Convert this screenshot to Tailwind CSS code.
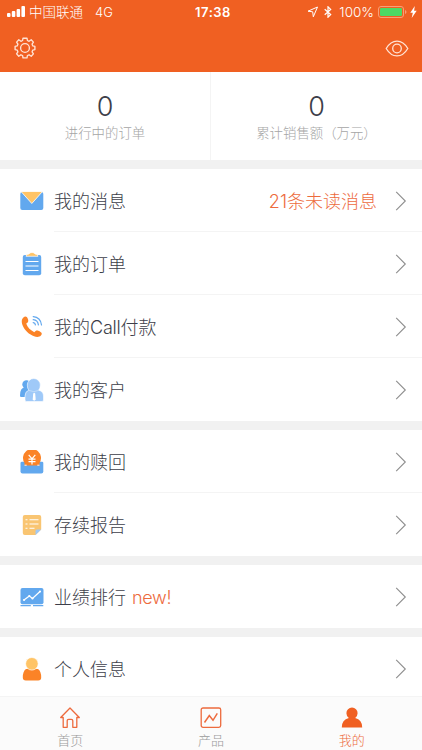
<!DOCTYPE html>
<html lang="zh-CN">
<head>
<meta charset="utf-8">
<title>我的</title>
<script src="https://cdn.jsdelivr.net/npm/@tailwindcss/browser@4"></script>
</head>
<body class="h-[750px] w-[422px] overflow-hidden bg-[#f1f1f1] font-['Inter','Noto_Sans_CJK_SC',sans-serif] font-light text-[#3d3e49]">
<svg class="hidden"><symbol id="chev" viewBox="0 0 12 20"><path d="M1.2 .8 10.3 10 1.2 19.2" fill="none" stroke="#8e8e8e" stroke-width="1.1"/></symbol></svg>
<div class="flex h-full flex-col">
  <header class="h-[72px] shrink-0 bg-[#f06022] text-white">
    <div class="grid h-6 grid-cols-3 items-center text-[13px] leading-6">
      <div class="flex items-center pl-[7px]">
        <svg class="h-3 w-[19px]" viewBox="0 0 19 12" fill="#fff"><rect y="7" width="3.5" height="4" rx="1"/><rect x="4.8" y="5" width="3.5" height="6" rx="1"/><rect x="9.6" y="3" width="3.5" height="8" rx="1"/><rect x="14.4" y="0" width="3.6" height="11" rx="1"/></svg>
        <span class="ml-[3px] text-[13.5px]">中国联通</span><span class="ml-3">4G</span>
      </div>
      <div class="pl-1 text-center text-[13px] font-semibold tracking-[0.5px]">17:38</div>
      <div class="flex items-center justify-end pr-[5px]">
        <svg class="h-3 w-3" viewBox="0 0 12 12" fill="none" stroke="#fff"><path d="M1 5.2 10.5 1 6.3 10.8 5.7 5.8Z"/></svg>
        <svg class="ml-[5px] h-3 w-2" viewBox="0 0 8 12" fill="none" stroke="#fff" stroke-width="1.2"><path d="M.7 3.2 6.7 8.6 4 11.2V.8L6.7 3.4.7 8.8"/></svg>
        <span class="ml-[7px] text-[13.5px]">100%</span>
        <svg class="ml-1 h-3 w-[29px]" viewBox="0 0 29 12"><rect x=".5" y=".5" width="25" height="11" rx="2.5" fill="none" stroke="#f8a078"/><rect x="2" y="2" width="22" height="8" rx="1.2" fill="#4cd964"/><path d="M27 4v4q1.5-.7 1.5-2T27 4" fill="#f8a078"/></svg>
        <svg class="ml-[3px] h-3 w-[7px]" viewBox="0 0 7 12" fill="#fff"><path d="M4.8 0 .3 6.7h2.5L1.7 12 6.7 4.8H4.1Z"/></svg>
      </div>
    </div>
    <div class="flex h-12 items-center justify-between pr-[13px] pl-3.5">
      <svg class="h-[22px] w-[22px]" viewBox="0 0 22 22" fill="none" stroke="#ffe3d5" stroke-width="1.35" stroke-linejoin="round"><circle cx="11" cy="11" r="4.4"/><path d="M9 1.2h4l.4 2.3 1.7.8 2.1-1.5 2.2 2.3-1.3 2.1.7 1.7 2.1.5v3.2l-2.1.5-.7 1.7 1.3 2.1-2.2 2.3-2.1-1.4-1.7.7-.4 2.3H9l-.4-2.3-1.7-.7-2.1 1.4-2.2-2.3 1.3-2.1-.7-1.7-2.1-.5V9.4l2.1-.5.7-1.7-1.3-2.1 2.2-2.3 2.1 1.5 1.7-.8Z"/></svg>
      <svg class="h-[17px] w-6" viewBox="0 0 24 17" fill="none" stroke="#ffe3d5" stroke-width="1.3"><path d="M1.2 8.5C7-1.4 17-1.4 22.8 8.5 17 18.4 7 18.4 1.2 8.5Z"/><circle cx="12" cy="8.5" r="4.3"/></svg>
    </div>
  </header>

  <section class="grid h-[88px] shrink-0 grid-cols-2 bg-white text-center">
    <div class="border-r border-[#f4f4f4] pt-[18px]"><div class="text-[27px] leading-[34px]">0</div><div class="-mt-px text-[13.4px] leading-5 text-[#a5a5a5]">进行中的订单</div></div>
    <div class="pt-[18px]"><div class="text-[27px] leading-[34px]">0</div><div class="-mt-px text-[13.4px] leading-5 text-[#a5a5a5]">累计销售额（万元）</div></div>
  </section>

  <main class="min-h-0 flex-1 overflow-hidden text-lg">
    <section class="mt-[9px] bg-white">
      <div class="flex h-[63px] items-center pl-5">
        <svg class="h-6 w-6" viewBox="0 0 24 24"><rect x=".3" y="3" width="23" height="18" rx="2" fill="#62a8ee"/><path d="M1 2.5h21.5L11.8 14.5Z" fill="#ffc466" stroke="#fff" stroke-width=".8"/></svg>
        <div class="ml-2.5 flex h-full flex-1 items-center pr-[15px] shadow-[inset_0_-1px_#f4f4f4]"><span class="flex-1 pt-[3px]">我的消息</span><span class="mr-[18px] pt-[3px] text-[#ed6b3e]">21条未读消息</span><svg class="mt-px h-5 w-3"><use href="#chev"/></svg></div>
      </div>
      <div class="flex h-[63px] items-center pl-5">
        <svg class="h-6 w-6" viewBox="0 0 24 24"><rect x="2.8" y="3" width="18.4" height="20.3" rx="2" fill="#62a8ee"/><path d="M6 4.3Q6 2 9 2 9.5.5 12 .5T15 2q3 0 3 2.3Z" fill="#ffc466" stroke="#fff" stroke-width=".7"/><path d="M5.5 9.5h13M5.5 14h13M5.500 18.500h13" stroke="#fff" stroke-width="1.1"/></svg>
        <div class="ml-2.5 flex h-full flex-1 items-center pr-[15px] shadow-[inset_0_-1px_#f4f4f4]"><span class="flex-1 pt-[3px]">我的订单</span><svg class="mt-px h-5 w-3"><use href="#chev"/></svg></div>
      </div>
      <div class="flex h-[63px] items-center pl-5">
        <svg class="h-6 w-6" viewBox="0 0 24 24"><path d="M3.4 2.5C5.4.8 7.4 1.5 8.2 5c.4 2-.7 2.7-2 3.6 1.2 3.8 4.5 7 8.1 8.6 1.4-1.6 2.3-2.2 4-1.4 3.8 1.5 4.2 3 2.6 4.8-2.2 2.4-6.5 1.5-10.3-1C5.8 16.5 2.3 11.6 1.8 7.2c-.2-2 .3-3.4 1.6-4.7Z" fill="#fb8327"/><g fill="none" stroke="#62a8ee" stroke-width="1.2" stroke-linecap="round"><path d="M13.2 1.6Q20.5 2 21.5 10M13.2 4.7q4.6.4 5.2 5.2M13.2 7.6q2 .2 2.2 2.3"/></g></svg>
        <div class="ml-2.5 flex h-full flex-1 items-center pr-[15px] shadow-[inset_0_-1px_#f4f4f4]"><span class="flex-1 pt-[3px]">我的<span class="tracking-[-0.2px]">Call</span>付款</span><svg class="mt-px h-5 w-3"><use href="#chev"/></svg></div>
      </div>
      <div class="flex h-[63px] items-center pl-5">
        <svg class="h-6 w-6" viewBox="0 0 24 24"><g fill="#62a8ee"><circle cx="6.5" cy="6.500" r="4.2"/><path d="M0 17.500q0-8 5-8h4v9.500H1Q0 19 0 17.500Z"/></g><path d="M5 22V18q0-4.500 3.800-5.800Q7.300 10.500 7.300 7a6.300 6.300 0 0 1 13 0q0 3.500-1.600 5.200Q23.500 13.500 23.500 18v4q0 1.500-1.500 1.500H6.500Q5 23.500 5 22Z" fill="#9fc9f8" stroke="#fff" stroke-width=".6"/><path d="M8.500 12.300Q14 15 19 12.300" fill="none" stroke="#cfe4fb" stroke-width=".7"/><path d="m13.200 15.500 1-.8 1 .8.500 6.200-1.500 1-1.500-1Z" fill="#fff"/></svg>
        <div class="ml-2.5 flex h-full flex-1 items-center pr-[15px]"><span class="flex-1 pt-[3px]">我的客户</span><svg class="mt-px h-5 w-3"><use href="#chev"/></svg></div>
      </div>
    </section>

    <section class="mt-[9px] bg-white">
      <div class="flex h-[63px] items-center pl-5">
        <svg class="h-6 w-6" viewBox="0 0 24 24"><path d="M2 11.700h20q1.300 0 1.300 1.300v8.500q0 2-2 2H2.500q-2 0-2-2V13q0-1.300 1.500-1.300Z" fill="#62a8ee"/><path d="M4.500 15.500V13A9 9 0 1 1 19.500 13v2.500Z" fill="#fb8327"/><path d="M4.500 15.200h2.200M17.300 15.200h2.200" stroke="#fff" stroke-width=".9"/><path d="m8.700 4.800 3.300 4 3.300-4M8.500 9.200h7M8.500 11.600h7M12 9v5.500" fill="none" stroke="#fff" stroke-width="1.200"/></svg>
        <div class="ml-2.5 flex h-full flex-1 items-center pr-[15px] shadow-[inset_0_-1px_#f4f4f4]"><span class="flex-1 pt-[3px]">我的赎回</span><svg class="mt-px h-5 w-3"><use href="#chev"/></svg></div>
      </div>
      <div class="flex h-[63px] items-center pl-5">
        <svg class="h-6 w-6" viewBox="0 0 24 24"><path d="M4.800 2h14.400q2 0 2 2v12.500L15.500 22H4.800q-2 0-2-2V4q0-2 2-2Z" fill="#f9c572"/><path d="M15.500 22v-4q0-1.500 1.500-1.500h4.200Z" fill="#9fc9f8"/><path d="M5.500 6.700h2M9.500 6.700h9M5.500 11h2M9.500 11h9M5.500 15.300h2M9.500 15.300h5" stroke="#fff" stroke-width="1.100"/></svg>
        <div class="ml-2.5 flex h-full flex-1 items-center pr-[15px]"><span class="flex-1 pt-[3px]">存续报告</span><svg class="mt-px h-5 w-3"><use href="#chev"/></svg></div>
      </div>
    </section>

    <section class="mt-[9px] flex h-[63px] items-center bg-white pr-[15px] pl-5">
      <svg class="h-6 w-6" viewBox="0 0 24 24"><rect x=".5" y="3" width="23" height="16.200" rx="2" fill="#62a8ee"/><path d="M.5 20.600h10.300M13 20.600h10.300" stroke="#62a8ee" stroke-width="1.300"/><path d="m4 15 5.300-4 3.200 2.500 7.500-7" fill="none" stroke="#fff" stroke-width="1.300"/><g fill="#fff"><circle cx="4" cy="15" r="1.100"/><circle cx="9.300" cy="11" r="1.100"/><circle cx="12.500" cy="13.500" r="1.100"/><circle cx="20" cy="6.500" r="1.100"/></g></svg>
      <span class="ml-2.5 flex-1 pt-[3px]">业绩排行<span class="ml-1.5 tracking-[-0.3px] text-[#ed6b3e]">new!</span></span><svg class="mt-px h-5 w-3"><use href="#chev"/></svg>
    </section>

    <section class="mt-[9px] flex h-[63px] items-center bg-white pr-[15px] pl-5">
      <svg class="h-6 w-6" viewBox="0 0 24 24"><path d="M6 12h12q3.200 2 3.200 8.500 0 3-3 3H5.800q-3 0-3-3Q2.800 14 6 12Z" fill="#fb8327"/><circle cx="11.900" cy="6.800" r="6.300" fill="#ffc466" stroke="#fff" stroke-width=".7"/></svg>
      <span class="ml-2.5 flex-1 pt-[3px]">个人信息</span><svg class="mt-px h-5 w-3"><use href="#chev"/></svg>
    </section>
  </main>

  <nav class="grid h-[54px] shrink-0 grid-cols-3 border-t border-[#f4f4f4] bg-[#fbfbfb] text-[13px] leading-[18px] text-[#9a9a9a]">
    <div class="flex flex-col items-center pt-2.5">
      <svg class="h-[22px] w-[22px]" viewBox="0 0 22 22" fill="none" stroke="#ed6b3e" stroke-width="1.300"><path d="M1.700 10.500 11 1l9.300 9.500h-2.500v9.800h-4v-6.500q0-1.500-1.500-1.500H9.700q-1.500 0-1.500 1.500v6.500h-4v-9.800Z" stroke-linejoin="round"/></svg>
      <span class="mt-0.5">首页</span>
    </div>
    <div class="flex flex-col items-center pt-2.5">
      <svg class="h-[22px] w-[22px]" viewBox="0 0 22 22" fill="none" stroke="#ed6b3e" stroke-width="1.300"><rect x="1.200" y="1" width="19.500" height="19.300" rx="1.800"/><path d="m4.500 15.500 4.800-7 3.700 4.800 4.300-7" stroke-width="1.500"/></svg>
      <span class="mt-0.5">产品</span>
    </div>
    <div class="flex flex-col items-center pt-2.5 text-[#ed6b3e]">
      <svg class="h-[22px] w-[22px]" viewBox="0 0 22 22" fill="#f06022"><path d="M11 .5a5.700 5.700 0 0 1 5.600 5.800q0 2.800-2.400 4.800 7 1.700 7 9.400H.8q0-7.700 7-9.400-2.400-2-2.400-4.800A5.700 5.700 0 0 1 11 .5Z"/></svg>
      <span class="mt-0.5">我的</span>
    </div>
  </nav>
</div>
</body>
</html>
